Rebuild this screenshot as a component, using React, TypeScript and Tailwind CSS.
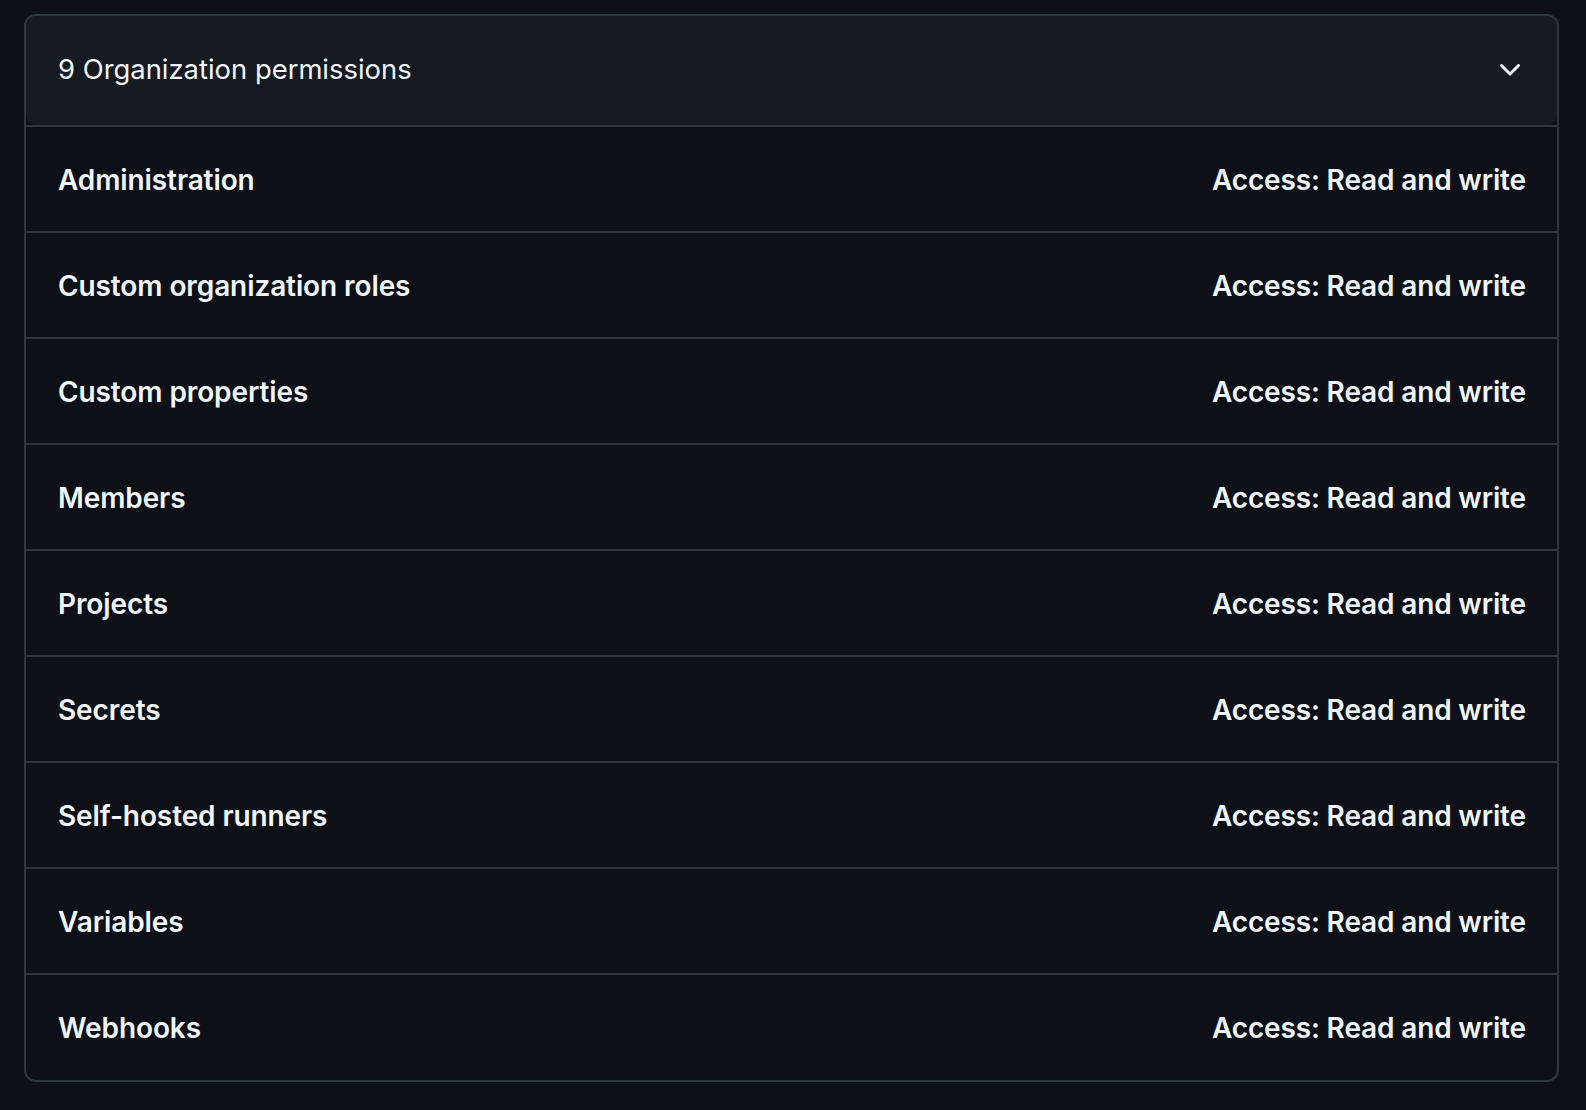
const permissions = [
  'Administration',
  'Custom organization roles',
  'Custom properties',
  'Members',
  'Projects',
  'Secrets',
  'Self-hosted runners',
  'Variables',
  'Webhooks',
];

const ChevronDown = () => (
  <svg width="32" height="32" viewBox="0 0 16 16" fill="currentColor">
    <path d="M12.78 5.22a.749.749 0 0 1 0 1.06l-4.25 4.25a.749.749 0 0 1-1.06 0L3.22 6.28a.749.749 0 1 1 1.06-1.06L8 8.939l3.72-3.719a.749.749 0 0 1 1.06 0Z" />
  </svg>
);

const App = () => {
  return (
    <div
      className="min-h-screen bg-[#0d1117] pt-[14px] pl-[24px] pr-[27px] text-[#f0f6fc]"
      style={{ fontFamily: 'Inter, "Noto Sans", sans-serif' }}
    >
      <div className="rounded-[12px] border-2 border-[#30363d] overflow-hidden">
        {/* Header */}
        <div className="flex items-center justify-between h-[109px] pl-[32px] pr-[31px] pb-[2px] bg-[#161b22] rounded-[10px]">
          <span className="text-[27.4px] leading-none">9 Organization permissions</span>
          <ChevronDown />
        </div>

        {/* Permission rows */}
        <div>
          {permissions.map((name, i) => (
            <div
              key={name}
              className={`flex items-center justify-between border-t-2 border-[#30363d] pl-[32px] pr-[31px] pt-[1px] ${
                i === permissions.length - 1 ? 'h-[107px]' : 'h-[106px]'
              }`}
            >
              <span className="text-[28px] font-semibold leading-none tracking-[-0.1px]">{name}</span>
              <span className="text-[28px] font-semibold leading-none tracking-[-0.15px]">
                Access: Read and write
              </span>
            </div>
          ))}
        </div>
      </div>
    </div>
  );
};

export default App;
